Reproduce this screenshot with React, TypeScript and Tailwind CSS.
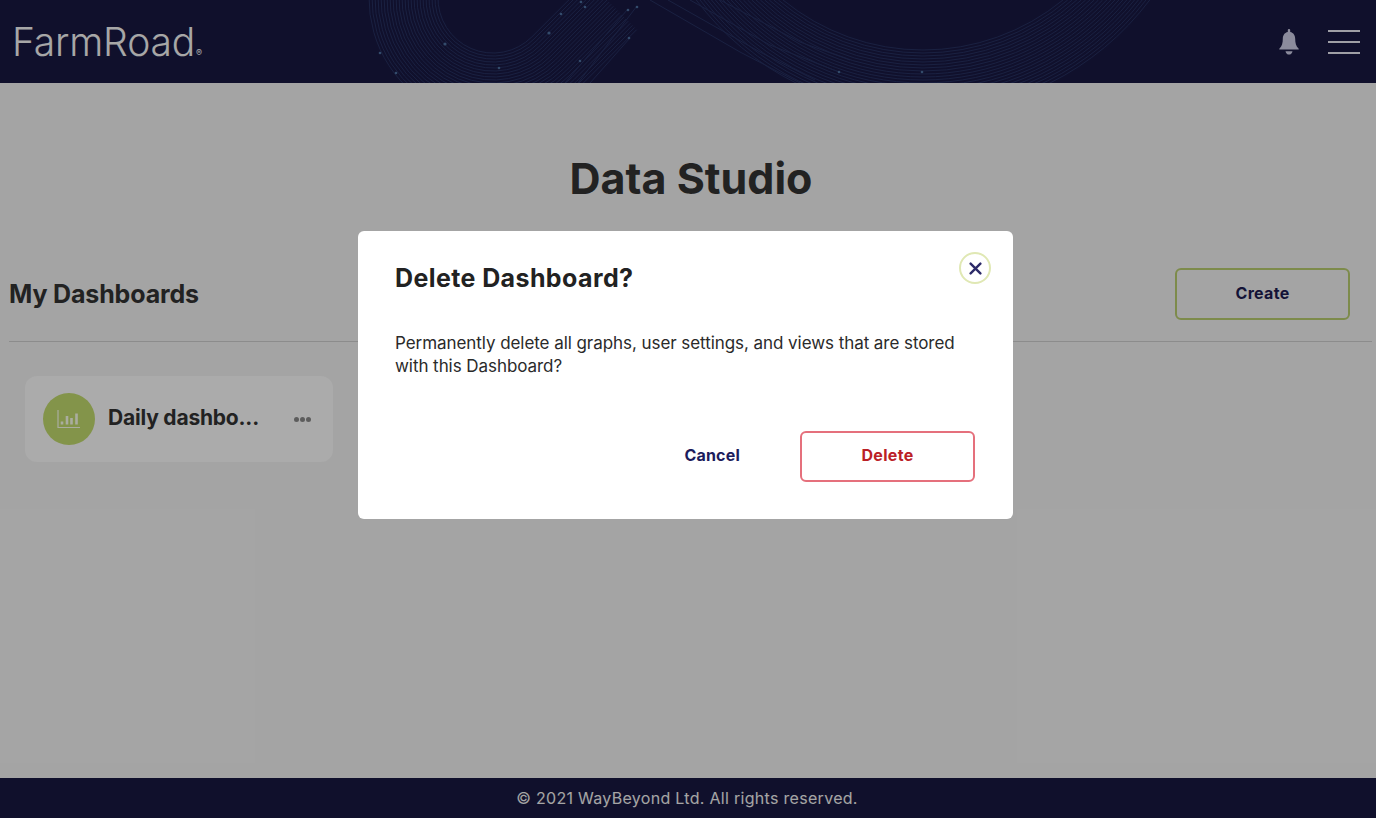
const ringRadii = Array.from({ length: 24 }, (_, i) => 55 + i * 3)
const bandRadii = Array.from({ length: 22 }, (_, i) => 221 + i * 3)

function HeaderArt() {
  return (
    <svg className="absolute inset-0" width="1376" height="83" viewBox="0 0 1376 83" fill="none">
      <g stroke="#33477c" strokeWidth="1" opacity="0.5">
        {ringRadii.map((r) => {
          const k = r * 0.7071
          const cx = 493
          const cy = -2
          const tail = 70 - (r % 3) * 14
          return (
            <path
              key={r}
              d={`M${cx - r} -4 A${r} ${r} 0 0 0 ${cx + k} ${cy + k} L${cx + k + tail} ${cy + k - tail}`}
            />
          )
        })}
        {bandRadii.map((r) => {
          const cx = 923
          const cy = -171
          const dx = Math.sqrt(r * r - 171 * 171)
          return <path key={r} d={`M${cx - dx} 0 A${r} ${r} 0 0 0 ${cx + dx} 0`} />
        })}
        <path d="M650 0 L740 52 L800 83 M668 0 L760 52 L815 80 M690 0 L770 45 L839 72 M720 0 L800 42 L850 60" />
        <path d="M565 83 L627 10 M578 83 L637 6 M590 83 L630 38" />
      </g>
      <g fill="#4a6c9a">
        <circle cx="380" cy="53" r="1.300" />
        <circle cx="396" cy="73" r="1.300" />
        <circle cx="445" cy="44" r="1.600" />
        <circle cx="499" cy="68" r="1.300" />
        <circle cx="549" cy="33" r="1.600" />
        <circle cx="561" cy="14" r="1.300" />
        <circle cx="581" cy="2" r="1.300" />
        <circle cx="585" cy="7" r="1.300" />
        <circle cx="628" cy="10" r="1.300" />
        <circle cx="637" cy="7" r="1.300" />
        <circle cx="629" cy="38" r="1.300" />
        <circle cx="580" cy="61" r="1.300" />
        <circle cx="839" cy="72" r="1.300" />
        <circle cx="922" cy="72" r="1.300" />
      </g>
    </svg>
  )
}

function BellIcon() {
  return (
    <svg width="20" height="26" viewBox="0 0 20 26" fill="#c8c8e0">
      <path d="M10 0c.8 0 1.2.6 1.2 1.4v1.5c3.4.7 5 3.5 5 7.1 0 3.8.8 7.4 3.5 9.7v.8H.3v-.8C3 17.400 3.800 13.800 3.800 10c0-3.600 1.600-6.400 5-7.100V1.400C8.800.6 9.200 0 10 0z" />
      <path d="M6.500 22.200h7c-.4 2.200-1.900 3.400-3.500 3.400s-3.100-1.200-3.500-3.400z" />
    </svg>
  )
}

function ChartIcon() {
  return (
    <svg width="24" height="20" viewBox="0 0 24 20" fill="none" stroke="#f4f8e4">
      <path d="M1 1v17.500h22" strokeWidth="1.200" />
      <path d="M5 15.500v-3M10 15.500V7M14.500 15.500V9M19.500 15.500V4.500" strokeWidth="2.600" />
    </svg>
  )
}

export default function App() {
  return (
    <div className="relative flex h-[818px] flex-col overflow-hidden bg-[#ebebeb] font-['Inter','Liberation_Sans',sans-serif]">
      <header className="relative flex h-[83px] shrink-0 items-center justify-between bg-[#181840] pl-[12px] pr-4">
        <HeaderArt />
        <div className="relative flex items-baseline text-[39px] font-light leading-none tracking-[-0.2px] text-[#f0f0f0]">
          FarmRoad
          <span className="ml-px text-[9px] font-normal">®</span>
        </div>
        <div className="relative flex items-center gap-[29px]">
          <BellIcon />
          <div className="flex w-8 flex-col gap-[9px]">
            <span className="h-[2px] bg-[#e4e4ee]" />
            <span className="h-[2px] bg-[#e4e4ee]" />
            <span className="h-[2px] bg-[#e4e4ee]" />
          </div>
        </div>
      </header>

      <main className="flex flex-1 flex-col">
        <h1 className="mt-[68px] pl-[6px] text-center text-[43px] font-bold leading-[54px] text-[#323232]">
          Data Studio
        </h1>
        <div className="mt-[63px] flex items-center justify-between pl-[9px] pr-[26px]">
          <h2 className="text-[25px] font-bold leading-8 tracking-[-0.15px] text-[#323232]">My Dashboards</h2>
          <button className="h-[52px] w-[175px] rounded-md border-2 border-[#b4c86c] pb-[2px] text-[16px] font-bold tracking-[0.3px] text-[#1c1c50]">
            Create
          </button>
        </div>
        <div className="ml-[9px] mr-1 mt-[21px] h-px bg-[#c9c9c9]" />
        <div className="ml-[25px] mt-[34px] flex h-[86px] w-[308px] items-center rounded-xl bg-[#f5f5f5] pl-[18px] pr-[22px]">
          <div className="flex h-[52px] w-[52px] shrink-0 items-center justify-center rounded-full bg-[#bcd46a]">
            <ChartIcon />
          </div>
          <span className="ml-[13px] flex-1 pb-[3px] text-[21px] font-bold tracking-[-0.2px] text-[#323232]">
            Daily dashbo...
          </span>
          <div className="flex gap-px">
            <span className="h-[5px] w-[5px] rounded-full bg-[#858585]" />
            <span className="h-[5px] w-[5px] rounded-full bg-[#858585]" />
            <span className="h-[5px] w-[5px] rounded-full bg-[#858585]" />
          </div>
        </div>
      </main>

      <footer className="flex h-10 shrink-0 items-center justify-center bg-[#181840] pr-[2px] text-[16px] tracking-[0.3px] text-[#ececec]">
        © 2021 WayBeyond Ltd. All rights reserved.
      </footer>

      <div className="absolute inset-0 bg-black/30 pl-[358px] pt-[231px]">
        <div className="relative h-[288px] w-[655px] rounded-md bg-white pl-[37px] pr-[38px] pt-[30px]">
          <button className="absolute right-[22px] top-[21px] flex h-8 w-8 items-center justify-center rounded-full border-2 border-[#e0e8b4]">
            <svg width="13" height="13" viewBox="0 0 12 12" fill="none" stroke="#2c2a68" strokeWidth="2.200" strokeLinecap="round">
              <path d="M1.500 1.500l9 9M10.500 1.500l-9 9" />
            </svg>
          </button>
          <h3 className="text-[25px] font-bold leading-[34px] tracking-[0.4px] text-[#222222]">Delete Dashboard?</h3>
          <p className="mt-[37px] text-[17px] leading-[23px] tracking-[-0.06px] text-[#2a2a2a]">
            Permanently delete all graphs, user settings, and views that are stored with this Dashboard?
          </p>
          <div className="mt-[53px] flex items-center justify-end">
            <button className="mr-[60px] pb-[3px] text-[16px] font-bold tracking-[0.2px] text-[#1c1c5c]">Cancel</button>
            <button className="h-[51px] w-[175px] rounded-md border-2 border-[#e5707c] pb-[3px] text-[16px] font-bold tracking-[0.3px] text-[#bb2026]">
              Delete
            </button>
          </div>
        </div>
      </div>
    </div>
  )
}
